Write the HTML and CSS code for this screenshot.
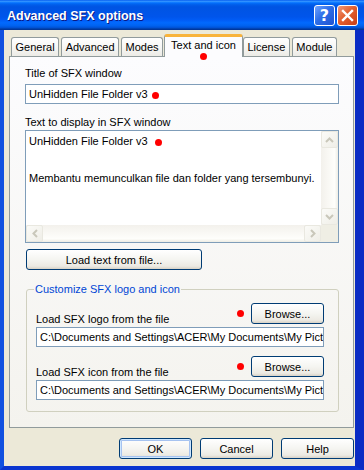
FILE: index.html
```html
<!DOCTYPE html>
<html lang="en">
<head>
  <meta charset="UTF-8" />
  <title>Advanced SFX options</title>
  <link rel="stylesheet" href="styles.css">
</head>
<body>
  <div class="window">
    <!-- title bar -->
    <div class="titlebar">
      <span class="title">Advanced SFX options</span>
      <div class="caption-btns">
        <span class="cap-btn help">?</span>
        <span class="cap-btn close">
          <svg width="13" height="13" viewBox="0 0 13 13"><path d="M2 2 L11 11 M11 2 L2 11" stroke="#fff" stroke-width="2.4" stroke-linecap="square"/></svg>
        </span>
      </div>
    </div>

    <div class="frame">
      <div class="body">
        <div class="tabs">
          <span class="tab">General</span>
          <span class="tab">Advanced</span>
          <span class="tab">Modes</span>
          <span class="tab active">Text and icon<i class="dot tab-dot"></i></span>
          <span class="tab">License</span>
          <span class="tab">Module</span>
        </div>

        <div class="panel">
          <div class="label">Title of SFX window</div>
          <div class="field">UnHidden File Folder v3<i class="dot"></i></div>

          <div class="label second">Text to display in SFX window</div>
          <div class="textarea">
            <div class="ta-text">
              <p>UnHidden File Folder v3 <i class="dot"></i></p>
              <p class="para">Membantu memunculkan file dan folder yang tersembunyi.</p>
            </div>
            <div class="vscroll">
              <span class="sb-btn"><svg width="9" height="6" viewBox="0 0 9 6"><path d="M1 5 L4.5 1.5 L8 5" fill="none" stroke="#c9c7ba" stroke-width="2"/></svg></span>
              <span class="sb-btn"><svg width="9" height="6" viewBox="0 0 9 6"><path d="M1 1 L4.5 4.5 L8 1" fill="none" stroke="#c9c7ba" stroke-width="2"/></svg></span>
            </div>
            <div class="hscroll">
              <span class="sb-btn"><svg width="6" height="9" viewBox="0 0 6 9"><path d="M5 1 L1.5 4.5 L5 8" fill="none" stroke="#c9c7ba" stroke-width="2"/></svg></span>
              <span class="sb-btn"><svg width="6" height="9" viewBox="0 0 6 9"><path d="M1 1 L4.5 4.5 L1 8" fill="none" stroke="#c9c7ba" stroke-width="2"/></svg></span>
            </div>
            <div class="corner"></div>
          </div>

          <button class="btn load">Load text from file...</button>

          <fieldset class="group">
            <legend>Customize SFX logo and icon</legend>
            <div class="row">
              <span class="row-label">Load SFX logo from the file</span>
              <i class="dot"></i>
              <button class="btn browse">Browse...</button>
            </div>
            <div class="field path">C:\Documents and Settings\ACER\My Documents\My Pict</div>
            <div class="row next">
              <span class="row-label">Load SFX icon from the file</span>
              <i class="dot"></i>
              <button class="btn browse">Browse...</button>
            </div>
            <div class="field path">C:\Documents and Settings\ACER\My Documents\My Pict</div>
          </fieldset>
        </div>

        <div class="footer">
          <button class="btn default">OK</button>
          <button class="btn">Cancel</button>
          <button class="btn">Help</button>
        </div>
      </div>
    </div>
  </div>
</body>
</html>
```

FILE: styles.css
```css
* {
  box-sizing: border-box;
}

body {
  margin: 0;
  font-family: "Liberation Sans", Arial, sans-serif;
  font-size: 11px;
  color: #000;
}

.window {
  width: 364px;
  height: 470px;
  display: flex;
  flex-direction: column;
  background-color: #0831d9;
  overflow: hidden;
}

/* title bar */
.titlebar {
  height: 30px;
  flex: none;
  display: flex;
  align-items: center;
  justify-content: space-between;
  padding: 0 6px 0 7px;
  background: linear-gradient(#0058ee 0%, #3593ff 4%, #288eff 6%, #127dff 8%, #036ffc 10%, #0262ee 14%, #0057e5 20%, #0054e3 24%, #0055eb 56%, #005bf5 66%, #026afe 76%, #0062ef 86%, #0052d6 92%, #0040ab 96%, #003092 100%);
}

.title {
  color: #fff;
  font-weight: bold;
  font-size: 12.5px;
  text-shadow: 1px 1px 0 #0a1883;
  padding-top: 1px;
}

.caption-btns {
  display: flex;
  gap: 2px;
  margin-top: 1px;
}

.cap-btn {
  width: 21px;
  height: 21px;
  border: 1px solid #fff;
  border-radius: 3px;
  display: flex;
  align-items: center;
  justify-content: center;
  color: #fff;
}

.help {
  background: linear-gradient(135deg, #6fa2ff 0%, #2d6ee8 45%, #1f52d0 100%);
  font-weight: bold;
  font-size: 16px;
  font-family: "DejaVu Sans", sans-serif;
}

.close {
  background: linear-gradient(135deg, #f0997a 0%, #e2602f 45%, #c83d14 100%);
}

/* frame + dialog body */
.frame {
  flex: 1;
  min-height: 0;
  display: flex;
  border-left: 4px solid #1151e0;
  border-right: 9px solid #0a2cc4;
  border-bottom: 4px solid #0a35d0;
}

.body {
  flex: 1;
  min-width: 0;
  display: flex;
  flex-direction: column;
  background-color: #ece9d8;
  padding: 4px 1px 7px 5px;
}

/* tabs */
.tabs {
  height: 22px;
  flex: none;
  display: flex;
  align-items: flex-end;
  padding-left: 2px;
}

.tab {
  height: 19px;
  padding: 3px 3.5px 0;
  margin-right: 2px;
  border: 1px solid #919b9c;
  border-bottom: none;
  border-radius: 3px 3px 0 0;
  background: linear-gradient(#ffffff, #f7f7f5 50%, #ecebe6);
  white-space: nowrap;
}

.tab.active {
  position: relative;
  height: 23px;
  margin: 0 0 -1px -1px;
  padding: 2px 6px 0;
  border-top: 3px solid #f8b33b;
  background: #fcfcfe;
  z-index: 1;
}

.tab-dot {
  position: absolute;
  left: 31px;
  top: 16px;
}

.dot {
  display: inline-block;
  width: 7px;
  height: 7px;
  border-radius: 50%;
  background-color: #f00;
  margin-left: 4px;
  vertical-align: -1px;
}

/* panel */
.panel {
  flex: 1;
  min-width: 0;
  border: 1px solid #919b9c;
  background: linear-gradient(#fcfcfe, #f4f3ee);
  padding: 10px 14px 0 15px;
}

.label {
  line-height: 13px;
}

.label.second {
  margin-top: 12px;
}

.field {
  height: 20px;
  margin-top: 4px;
  border: 1px solid #7f9db9;
  background-color: #fff;
  padding: 3px 3px 0;
  white-space: nowrap;
  overflow: hidden;
}

.textarea {
  height: 113px;
  margin-top: 1px;
  border: 1px solid #7f9db9;
  background-color: #fff;
  display: grid;
  grid-template-columns: 1fr 17px;
  grid-template-rows: 1fr 17px;
}

.ta-text {
  padding: 4px 3px;
  line-height: 13px;
  overflow: hidden;
}

.ta-text p {
  margin: 0;
  white-space: nowrap;
}

.ta-text .para {
  margin-top: 24px;
}

.vscroll {
  display: flex;
  flex-direction: column;
  justify-content: space-between;
  background: linear-gradient(to right, #f3f1ec, #fefefb 80%, #eeede5);
}

.hscroll {
  display: flex;
  justify-content: space-between;
  background: linear-gradient(#f3f1ec, #fefefb 80%, #eeede5);
}

.corner {
  background-color: #efeee4;
}

.sb-btn {
  width: 17px;
  height: 17px;
  display: flex;
  align-items: center;
  justify-content: center;
  border: 1px solid #e9e8e0;
  border-radius: 2px;
  background: linear-gradient(135deg, #fbfbf8, #efeee7);
}

/* buttons */
.btn {
  height: 21px;
  width: 73px;
  flex: none;
  padding: 0;
  font-family: inherit;
  font-size: 11px;
  color: #000;
  border: 1px solid #003c74;
  border-radius: 3px;
  background: linear-gradient(#ffffff, #f5f5f1 50%, #eceae3 85%, #d8d2c6);
}

.btn.load {
  display: block;
  width: 176px;
  margin: 6px 0 0 1px;
}

.btn.default {
  box-shadow: inset 0 0 0 1px #cee7ff, inset 0 0 0 2px #a6c3f0;
}

/* group box */
.group {
  min-width: 0;
  margin: 13px 0 0 1px;
  padding: 7px 14px 11px 9px;
  border: 1px solid #d0d0bf;
  border-radius: 3px;
}

.group legend {
  color: #0046d5;
  padding: 0 1px;
  margin-left: -2px;
  line-height: 13px;
}

.row {
  display: flex;
  align-items: center;
  height: 21px;
}

.row.next {
  margin-top: 9px;
}

.row-label {
  align-self: flex-end;
  margin-bottom: -2px;
  line-height: 13px;
}

.row .dot {
  margin-left: auto;
  margin-right: 7px;
  vertical-align: baseline;
}

.field.path {
  margin-top: 3px;
}

/* footer */
.footer {
  display: flex;
  flex: none;
  justify-content: flex-end;
  gap: 8px;
  margin-top: 10px;
}
```
